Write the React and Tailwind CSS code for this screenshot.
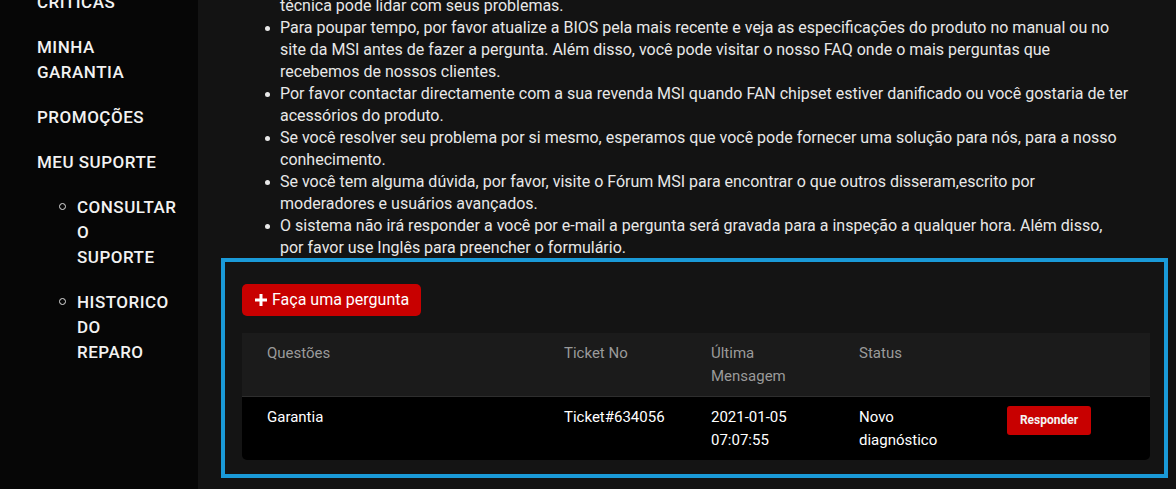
const bullets = [
  ['Para poupar tempo, por favor atualize a BIOS pela mais recente e veja as especificações do produto no manual ou no', 'site da MSI antes de fazer a pergunta. Além disso, você pode visitar o nosso FAQ onde o mais perguntas que', 'recebemos de nossos clientes.'],
  ['Por favor contactar directamente com a sua revenda MSI quando FAN chipset estiver danificado ou você gostaria de ter', 'acessórios do produto.'],
  ['Se você resolver seu problema por si mesmo, esperamos que você pode fornecer uma solução para nós, para a nosso', 'conhecimento.'],
  ['Se você tem alguma dúvida, por favor, visite o Fórum MSI para encontrar o que outros disseram,escrito por', 'moderadores e usuários avançados.'],
  ['O sistema não irá responder a você por e-mail a pergunta será gravada para a inspeção a qualquer hora. Além disso,', 'por favor use Inglês para preencher o formulário.'],
]

const font = { fontFamily: '"Roboto", "Liberation Sans", sans-serif' }

function Sidebar() {
  return (
    <aside className="w-[198px] shrink-0 bg-[#060606] pl-[37px] text-[17px] leading-[25px] font-medium tracking-[0.5px] text-[#f2f2f2]">
      <ul className="-mt-[10px] flex flex-col gap-[20px]">
        <li>CRITICAS</li>
        <li>MINHA<br />GARANTIA</li>
        <li>PROMOÇÕES</li>
        <li>MEU SUPORTE</li>
        <li>
          <ul className="flex flex-col gap-[20px]">
            {[['CONSULTAR', 'O', 'SUPORTE'], ['HISTORICO', 'DO', 'REPARO']].map((lines) => (
              <li key={lines[0]} className="flex">
                <span className="w-[40px] shrink-0 pl-[22px] pt-[8px]">
                  <span className="block h-[7px] w-[7px] rounded-full border border-[#ddd]" />
                </span>
                <span>
                  {lines.map((l) => (
                    <span key={l} className="block">{l}</span>
                  ))}
                </span>
              </li>
            ))}
          </ul>
        </li>
      </ul>
    </aside>
  )
}

export default function App() {
  return (
    <div style={font} className="flex h-[489px] w-[1176px] overflow-hidden bg-[#131313] text-[15px]">
      <Sidebar />
      <main className="flex-1 pl-[23px] pr-[8px]">
        <ul className="-mt-[5px] pl-[59px] text-[16px] leading-[22px] text-[#e8e8e8]">
          <li className="whitespace-nowrap">técnica pode lidar com seus problemas.</li>
          {bullets.map((lines) => (
            <li key={lines[0]} className="relative whitespace-nowrap">
              <span className="absolute -left-[15px] top-[9px] h-[5px] w-[5px] rounded-full bg-[#e8e8e8]" />
              {lines.map((l) => (
                <span key={l} className="block">{l}</span>
              ))}
            </li>
          ))}
        </ul>

        <section className="-mt-[1px] h-[220px] w-[947px] border-4 border-[#1a9ad8] bg-[#141414] pl-[17px] pt-[22px]">
          <button className="flex h-[32px] w-[179px] items-center gap-[5px] rounded-[5px] bg-[#c80000] pl-[13px] text-[16px] text-white">
            <svg width="12" height="12" viewBox="0 0 12 12" fill="#fff">
              <rect x="4.5" y="0" width="3" height="12" />
              <rect x="0" y="4.5" width="12" height="3" />
            </svg>
            Faça uma pergunta
          </button>

          <div className="mt-[17px] w-[908px] overflow-hidden rounded-b-[5px] bg-black">
            <div className="grid h-[64px] grid-cols-[322px_147px_148px_148px_1fr] border-b border-[#2e2e2e] bg-[#1b1b1b] pt-[9px] leading-[23px] text-[#9a9a9a]">
              <div className="pl-[25px]">Questões</div>
              <div>Ticket No</div>
              <div>Última<br />Mensagem</div>
              <div>Status</div>
              <div />
            </div>
            <div className="grid h-[63px] grid-cols-[322px_147px_148px_148px_1fr] pt-[9px] leading-[23px] text-white">
              <div className="pl-[25px]">Garantia</div>
              <div>Ticket#634056</div>
              <div>2021-01-05<br />07:07:55</div>
              <div>Novo<br />diagnóstico</div>
              <div>
                <button className="h-[29px] w-[84px] rounded-[3px] bg-[#c80000] text-[12px] font-bold text-[#f4f4f4]">
                  Responder
                </button>
              </div>
            </div>
          </div>
        </section>
      </main>
    </div>
  )
}
